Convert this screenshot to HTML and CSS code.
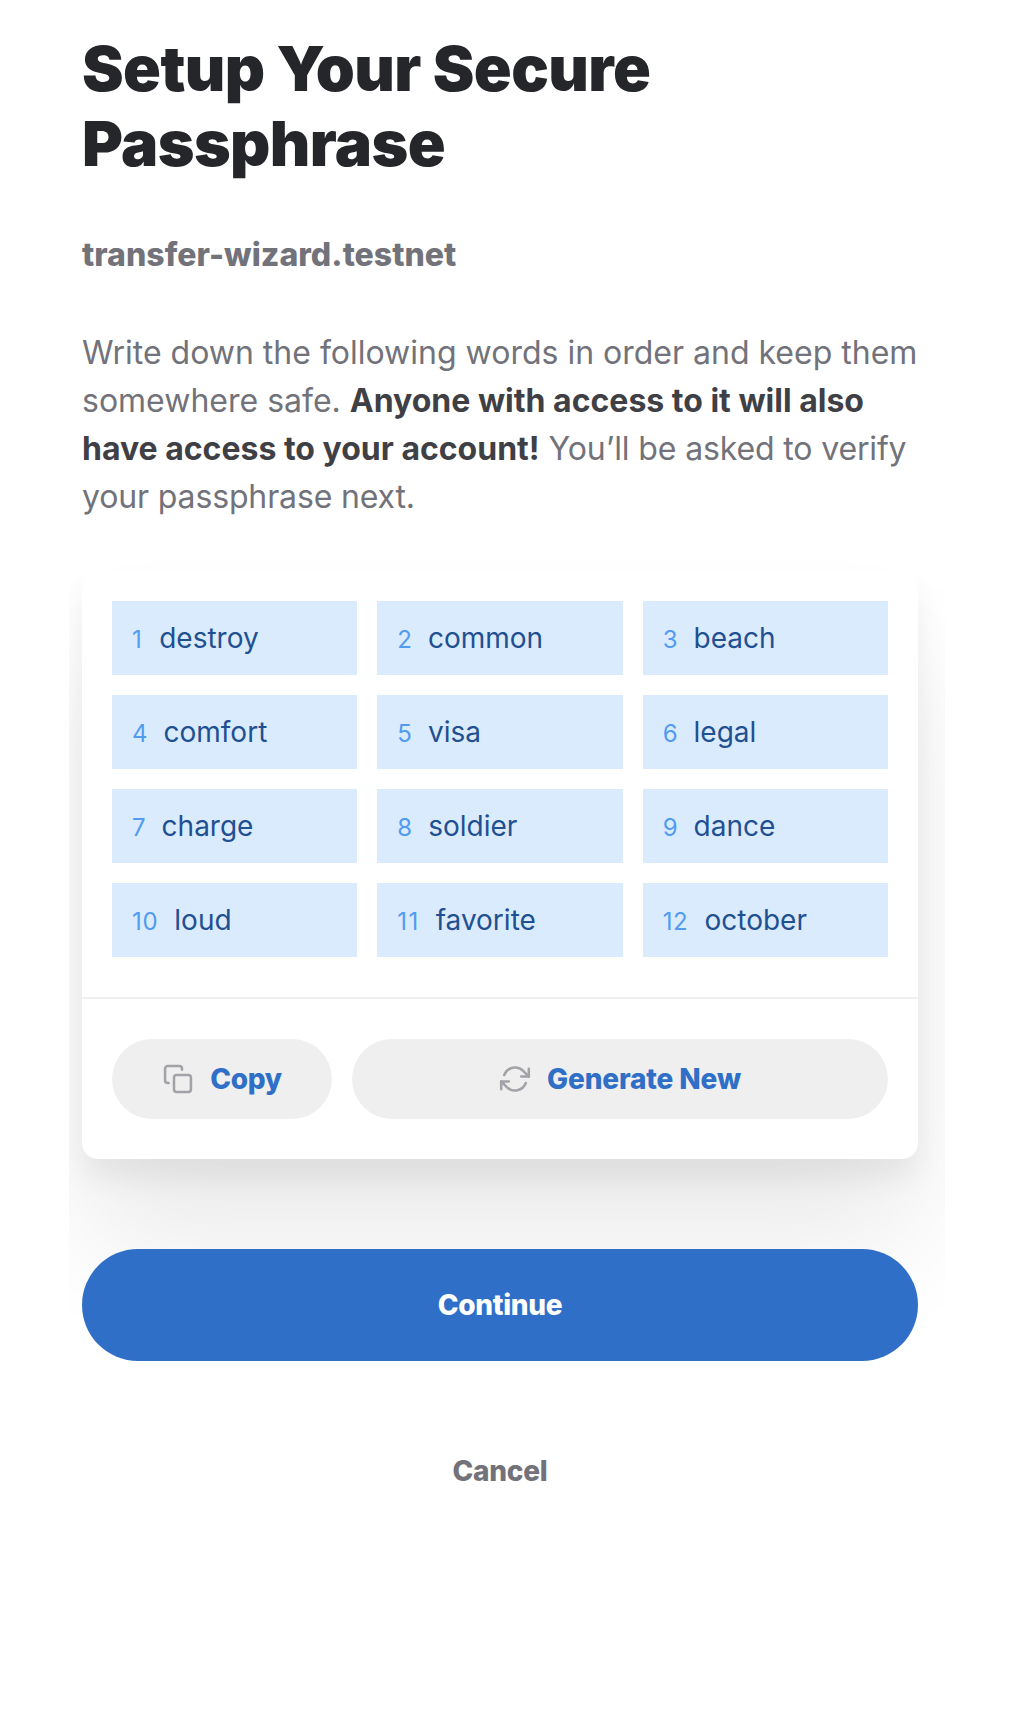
FILE: index.html
```html
<!DOCTYPE html>
<html lang="en">
<head>
<meta charset="utf-8">
<title>Setup Your Secure Passphrase</title>
<link rel="stylesheet" href="styles.css">
</head>
<body>
<main class="page">
  <h1 class="title">Setup Your Secure Passphrase</h1>
  <h2 class="account">transfer-wizard.testnet</h2>
  <p class="intro">Write down the following words in order and keep them somewhere safe. <strong>Anyone with access to it will also have access to your account!</strong> <span class="tight">You’ll be asked to verify your passphrase next.</span></p>
  <section class="card">
    <ol class="words">
      <li class="word"><span class="num num-one">1</span><span>destroy</span></li>
      <li class="word"><span class="num">2</span><span>common</span></li>
      <li class="word"><span class="num">3</span><span>beach</span></li>
      <li class="word"><span class="num">4</span><span>comfort</span></li>
      <li class="word"><span class="num">5</span><span>visa</span></li>
      <li class="word"><span class="num">6</span><span>legal</span></li>
      <li class="word"><span class="num">7</span><span>charge</span></li>
      <li class="word"><span class="num">8</span><span>soldier</span></li>
      <li class="word"><span class="num">9</span><span>dance</span></li>
      <li class="word"><span class="num num-ten">10</span><span>loud</span></li>
      <li class="word"><span class="num num-one">11</span><span>favorite</span></li>
      <li class="word"><span class="num num-ten">12</span><span>october</span></li>
    </ol>
    <div class="actions">
      <button class="pill"><svg class="icon" viewBox="0 0 24 24"><rect x="9" y="9" width="12.700" height="12.700" rx="2"/><path d="M5 15H4.300a2 2 0 0 1-2-2V4.300a2 2 0 0 1 2-2H13a2 2 0 0 1 2 2V5"/></svg><span>Copy</span></button>
      <button class="pill pill-wide"><svg class="icon" viewBox="0 0 24 24"><path d="M22.350 4.350v5.850h-5.700M1.650 19.650V13.800h5.700"/><path d="M3.900 9a8.700 8.700 0 0 1 14.250-3.150l4.200 4.350M1.650 13.800l4.200 4.350A8.700 8.700 0 0 0 20.100 15"/></svg><span>Generate New</span></button>
    </div>
  </section>
  <button class="continue">Continue</button>
  <button class="cancel">Cancel</button>
</main>
</body>
</html>
```
FILE: styles.css
```css
* { box-sizing: border-box; }
body { margin: 0; background: #fff; font-family: Inter, "Liberation Sans", sans-serif; color: #72727a; }
.page { width: 836px; margin-left: 82px; padding-top: 31px; }
.title { width: 700px; margin: 0; font-size: 62.5px; line-height: 75px; font-weight: 900; letter-spacing: -0.56px; color: #25262a; }
.account { margin: 50px 0 0; font-size: 32px; line-height: 48px; font-weight: 800; letter-spacing: .04px; }
.intro { margin: 50px 0 0; font-size: 32px; line-height: 48px; }
.intro strong { color: #3f4045; font-weight: 700; }
.tight { letter-spacing: -0.14px; }
.card { margin-top: 50px; border-radius: 16px; background: #fff; box-shadow: 0 84px 120px rgba(0,0,0,.082), 0 20px 30px rgba(0,0,0,.06); clip-path: inset(-100px -27px -260px -13px); }
.words { list-style: none; margin: 0; padding: 30px 30px 40px; display: grid; grid-template-columns: repeat(3, 1fr); gap: 20px; }
.word { display: flex; align-items: baseline; gap: 16px; height: 74px; padding: 0 20px; background: #dbebfe; color: #1f5091; font-size: 28px; line-height: 74px; }
.num { font-size: 24px; color: #519bf1; }
.num-one { letter-spacing: 1.4px; }
.num-ten { letter-spacing: .7px; }
.actions { display: flex; gap: 20px; padding: 40px 30px; border-top: 2px solid #efefef; }
button { border: 0; font: 800 28px/34px Inter, "Liberation Sans", sans-serif; letter-spacing: -0.28px; display: flex; align-items: center; justify-content: center; }
.pill { width: 220px; height: 80px; border-radius: 40px; background: #efefef; color: #2f6fc7; gap: 16px; }
.pill-wide { flex: 1; letter-spacing: -0.15px; }
.icon { width: 32px; height: 32px; fill: none; stroke: #a2a2a8; stroke-width: 1.9; stroke-linecap: round; stroke-linejoin: round; }
.continue { position: relative; width: 100%; height: 112px; margin-top: 90px; border-radius: 56px; background: #2f6fc7; color: #fff; }
.cancel { width: 100%; height: 80px; margin-top: 70px; background: none; color: #72727a; }
```
